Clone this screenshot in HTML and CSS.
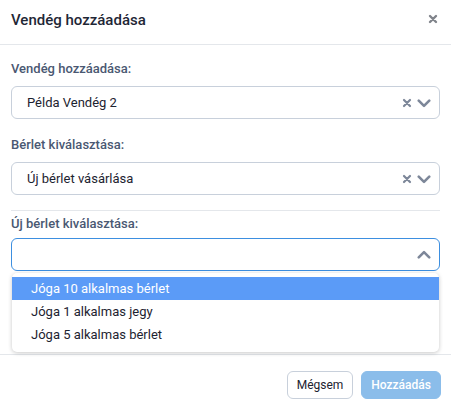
FILE: index.html
```html
<!DOCTYPE html>
<html lang="hu">
<head>
    <meta charset="UTF-8">
    <meta name="viewport" content="width=device-width, initial-scale=1.0">
    <title>Vendég hozzáadása</title>
    <link rel="stylesheet" href="styles.css">
</head>
<body>
    <div class="modal">
        <div class="modal-header">
            <h2 class="modal-title">Vendég hozzáadása</h2>
            <svg class="close" viewBox="0 0 10 10"><path d="M2 2 L8 8 M8 2 L2 8"/></svg>
        </div>

        <div class="modal-body">
            <label class="field-label">Vendég hozzáadása:</label>
            <div class="select">
                <span class="select-value">Példa Vendég 2</span>
                <span class="select-icons">
                    <svg class="icon" viewBox="0 0 10 10"><path d="M2 2 L8 8 M8 2 L2 8"/></svg>
                    <svg class="icon chevron" viewBox="0 0 12 10"><path d="M1.5 3 L6 7.5 L10.5 3"/></svg>
                </span>
            </div>

            <label class="field-label">Bérlet kiválasztása:</label>
            <div class="select">
                <span class="select-value">Új bérlet vásárlása</span>
                <span class="select-icons">
                    <svg class="icon" viewBox="0 0 10 10"><path d="M2 2 L8 8 M8 2 L2 8"/></svg>
                    <svg class="icon chevron" viewBox="0 0 12 10"><path d="M1.5 3 L6 7.5 L10.5 3"/></svg>
                </span>
            </div>

            <hr class="divider">

            <label class="field-label tight">Új bérlet kiválasztása:</label>
            <div class="select-wrap">
                <div class="select focused">
                    <span class="select-value"></span>
                    <span class="select-icons">
                        <svg class="icon chevron" viewBox="0 0 12 10"><path d="M1.5 7 L6 2.5 L10.5 7"/></svg>
                    </span>
                </div>
                <ul class="menu">
                    <li class="option active">Jóga 10 alkalmas bérlet</li>
                    <li class="option">Jóga 1 alkalmas jegy</li>
                    <li class="option">Jóga 5 alkalmas bérlet</li>
                </ul>
            </div>
        </div>

        <div class="modal-footer">
            <button type="button" class="btn btn-cancel">Mégsem</button>
            <button type="button" class="btn btn-primary">Hozzáadás</button>
        </div>
    </div>
</body>
</html>
```

FILE: styles.css
```css
body {
    margin: 0;
    background: #fff;
    font-family: Roboto, "Noto Sans", sans-serif;
    color: #1d2330;
}

.modal {
    width: 451px;
}

.modal-header {
    display: flex;
    justify-content: space-between;
    align-items: center;
    height: 44px;
    padding: 0 11px;
    border-bottom: 1px solid #e4e7eb;
}

.modal-title {
    margin: 0;
    font-size: 15px;
    font-weight: 500;
    color: #1f2736;
    margin-top: -4px;
}

.close {
    width: 10px;
    height: 10px;
    fill: none;
    stroke: #80848b;
    stroke-width: 2.4;
    stroke-linecap: round;
    margin: -6px 2px 0 0;
}

.modal-body {
    padding: 15px 11px 83px;
}

.field-label {
    display: block;
    font-size: 13px;
    font-weight: 500;
    color: #4a5872;
    line-height: 18px;
    margin-bottom: 8px;
}

.field-label.tight {
    margin-bottom: 5px;
}

.select {
    display: flex;
    align-items: center;
    justify-content: space-between;
    height: 31px;
    border: 1px solid #c8d0db;
    border-radius: 6px;
    padding: 0 8px 0 15px;
    margin-bottom: 17px;
    font-size: 13px;
}

.select.focused {
    border-color: #3d8fe0;
    margin-bottom: 0;
}

.select-icons {
    display: flex;
    align-items: center;
    gap: 5px;
}

.icon {
    width: 10px;
    height: 10px;
    fill: none;
    stroke: #7d8799;
    stroke-width: 2.2;
    stroke-linecap: round;
    stroke-linejoin: round;
}

.icon.chevron {
    width: 14px;
    height: 12px;
}

.divider {
    border: none;
    border-top: 1px solid #e4e7eb;
    margin: -2px 0 4px;
}

.select-wrap {
    position: relative;
}

.menu {
    position: absolute;
    top: 35px;
    left: 1px;
    right: 1px;
    margin: 0;
    padding: 4px 0 6px;
    list-style: none;
    background: #fff;
    border-radius: 5px;
    box-shadow: 0 1px 4px rgba(0, 0, 0, 0.22);
    font-size: 13px;
}

.option {
    height: 23px;
    line-height: 23px;
    padding-left: 19px;
    color: #1d2330;
}

.option.active {
    background: #5b9bf7;
    color: #fff;
}

.modal-footer {
    display: flex;
    justify-content: flex-end;
    gap: 8px;
    padding: 16px 10px 8px;
    border-top: 1px solid #e4e7eb;
}

.btn {
    height: 28px;
    border-radius: 6px;
    font-family: inherit;
    font-size: 12px;
    padding: 0 8px;
}

.btn-cancel {
    background: #fff;
    border: 1px solid #c8d0db;
    color: #1d2330;
    width: 66px;
}

.btn-primary {
    background: #8bbdea;
    border: 1px solid #8bbdea;
    color: #fff;
    font-weight: 500;
    width: 80px;
}
```
